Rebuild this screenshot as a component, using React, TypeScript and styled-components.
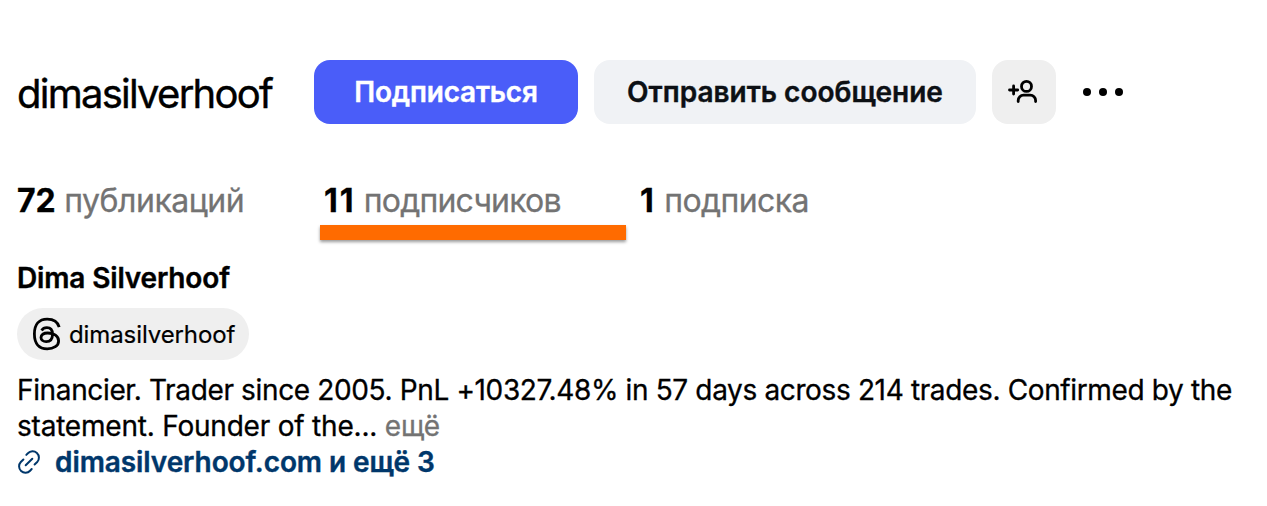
import React from 'react';
import styled, { createGlobalStyle } from 'styled-components';

const GlobalStyle = createGlobalStyle`
  body {
    margin: 0;
    background: #fff;
    color: #000;
    font-family: Inter, 'Liberation Sans', sans-serif;
  }
`;

const Profile = styled.main`
  box-sizing: border-box;
  width: 1267px;
  height: 506px;
  padding: 60px 17px 0;
  overflow: hidden;
`;

const TopRow = styled.header`
  display: flex;
  align-items: center;
  height: 64px;
`;

const Username = styled.h2`
  width: 297px;
  margin: 0;
  padding-top: 3px;
  font-size: 40px;
  font-weight: 400;
  line-height: 50px;
  letter-spacing: -1.75px;
  -webkit-text-stroke: 0.4px;
`;

const Button = styled.button<{ $primary?: boolean; $width: number }>`
  width: ${({ $width }) => $width}px;
  height: 64px;
  margin-right: 16px;
  padding: 0;
  border: 0;
  border-radius: 16px;
  background: ${({ $primary }) => ($primary ? '#4a5df9' : '#f0f2f5')};
  color: ${({ $primary }) => ($primary ? '#fff' : '#0c1014')};
  font: inherit;
  font-size: 28px;
  font-weight: 600;
  letter-spacing: ${({ $primary }) => ($primary ? '-0.2px' : '0')};
  white-space: nowrap;
  -webkit-text-stroke: 0.4px;
`;

const IconButton = styled(Button)`
  display: flex;
  align-items: center;
  justify-content: center;
  background: #efefef;
  color: #000;
`;

const Stats = styled.ul`
  display: flex;
  margin: 57px 0 0;
  padding: 0;
  list-style: none;
  font-size: 32px;
  line-height: 40px;
  color: #737373;
  -webkit-text-stroke: 0.3px;
`;

const Stat = styled.li<{ $width?: number; $spacing: number }>`
  position: relative;
  width: ${({ $width }) => ($width ? `${$width}px` : 'auto')};
  letter-spacing: ${({ $spacing }) => $spacing}px;
  white-space: nowrap;
`;

const Count = styled.b<{ $spacing?: number }>`
  color: #000;
  font-weight: 700;
  letter-spacing: ${({ $spacing = 0 }) => $spacing}px;
`;

const Marker = styled.span`
  position: absolute;
  top: 44px;
  left: -4px;
  width: 306px;
  height: 15px;
  background: #ff6b00;
  box-shadow: 0 2px 3px rgba(0, 0, 0, 0.4);
`;

const Name = styled.h1`
  margin: 39px 0 0;
  font-size: 28px;
  font-weight: 600;
  line-height: 36px;
  letter-spacing: -0.15px;
  -webkit-text-stroke: 0.4px;
`;

const ThreadsBadge = styled.a`
  display: flex;
  align-items: center;
  box-sizing: border-box;
  width: 232px;
  height: 52px;
  margin: 12px 0;
  padding-left: 14px;
  border-radius: 26px;
  background: #efefef;
  font-size: 24px;
  letter-spacing: -0.1px;
  -webkit-text-stroke: 0.2px;

  svg {
    margin-right: 6px;
  }
`;

const Bio = styled.p`
  margin: 0;
  font-size: 28px;
  line-height: 36px;
  white-space: nowrap;
  -webkit-text-stroke: 0.3px;
`;

const BioLine = styled.span<{ $spacing: number }>`
  display: block;
  letter-spacing: ${({ $spacing }) => $spacing}px;
`;

const More = styled.span`
  color: #737373;
`;

const SiteLink = styled.a`
  display: flex;
  align-items: center;
  height: 36px;
  color: #00376b;
  font-size: 28px;
  font-weight: 600;
  letter-spacing: -0.08px;
  -webkit-text-stroke: 0.4px;

  svg {
    margin-right: 14px;
  }
`;

const AddUserIcon = () => (
  <svg width="32" height="32" viewBox="0 0 32 32" fill="none" stroke="currentColor" strokeWidth="2.8" strokeLinecap="round">
    <circle cx="18.5" cy="10.4" r="5" />
    <path d="M10.2 25.5v-1a5.3 5.3 0 0 1 5.3-5.3h6.8a5.3 5.3 0 0 1 5.3 5.3v1M1.5 14h8.2M5.6 9.9v8.2" />
  </svg>
);

const DotsIcon = styled.svg`
  margin-left: 8px;
`;

const MoreIcon = () => (
  <DotsIcon width="48" height="48" viewBox="0 0 48 48">
    <circle cx="7" cy="24" r="4" />
    <circle cx="23" cy="24" r="4" />
    <circle cx="39" cy="24" r="4" />
  </DotsIcon>
);

const ThreadsIcon = () => (
  <svg width="32" height="36" viewBox="0 0 32 36" fill="none" stroke="currentColor" strokeWidth="2.8">
    <path d="M28.2 11.2C26.6 5.4 22 3.2 16.2 3.2C8 3.2 3.4 8.5 3.4 18S8 32.9 16.2 32.9c6.6 0 11.4-3.2 11.4-8c0-4.9-4.6-7.9-10.9-7.9c-4.3 0-6.7 1.8-6.7 4.4c0 2.5 2.3 4.2 5.2 4.2c4.1 0 6.3-2.7 6.3-7.4c0-4.4-2-6.5-5.6-6.5c-2.5 0-4.2.9-5.3 2.7" />
  </svg>
);

const LinkIcon = () => (
  <svg width="24" height="24" viewBox="0 0 24 24" fill="none" stroke="currentColor" strokeWidth="2" strokeLinecap="round">
    <path d="M9.3 4.9l1.6-1.6a6.3 6.3 0 0 1 9.3 8.7l-2.6 2.5M14.7 19l-1.6 1.7a6.3 6.3 0 0 1-9.3-8.7l2.6-2.5M8.7 15.3l6.6-6.6" />
  </svg>
);

function App() {
  return (
    <>
      <GlobalStyle />
      <Profile>
        <TopRow>
          <Username>dimasilverhoof</Username>
          <Button $primary $width={264}>
            Подписаться
          </Button>
          <Button $width={382}>Отправить сообщение</Button>
          <IconButton $width={64} aria-label="Add">
            <AddUserIcon />
          </IconButton>
          <MoreIcon />
        </TopRow>
        <Stats>
          <Stat $width={307} $spacing={-0.5}>
            <Count>72</Count> публикаций
          </Stat>
          <Stat $width={316} $spacing={-0.8}>
            <Count $spacing={2}>11</Count> подписчиков
            <Marker />
          </Stat>
          <Stat $spacing={-0.6}>
            <Count $spacing={2}>1</Count> подписка
          </Stat>
        </Stats>
        <Name>Dima Silverhoof</Name>
        <ThreadsBadge>
          <ThreadsIcon />
          dimasilverhoof
        </ThreadsBadge>
        <Bio>
          <BioLine $spacing={-0.36}>
            Financier. Trader since 2005. PnL +10327.48% in 57 days across 214 trades. Confirmed by the
          </BioLine>
          <BioLine $spacing={-0.21}>
            statement. Founder of the... <More>ещё</More>
          </BioLine>
        </Bio>
        <SiteLink>
          <LinkIcon />
          dimasilverhoof.com и ещё 3
        </SiteLink>
      </Profile>
    </>
  );
}

export default App;
